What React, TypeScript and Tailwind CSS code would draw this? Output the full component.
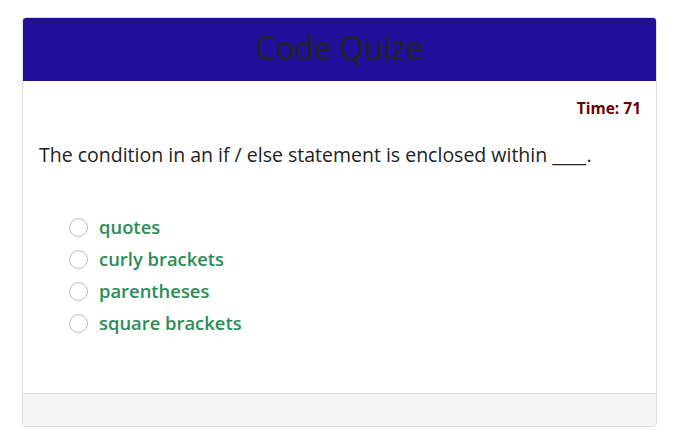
import React from "react";

const options = ["quotes", "curly brackets", "parentheses", "square brackets"];

export default function App() {
  return (
    <div className="w-[673px] h-[448px] bg-white pt-[17px] px-[22px]" style={{ fontFamily: '"Open Sans", "Noto Sans", sans-serif' }}>
      <div className="w-[635px] border border-[#dddddd] rounded-[4px] overflow-hidden flex flex-col">
        <div className="h-[63px] bg-[#220f99] flex items-center justify-center pb-[4px]">
          <h1 className="text-[32px] leading-none text-[#222222] tracking-[-0.3px]">Code Quize</h1>
        </div>
        <div className="h-[312px] px-[16px] pt-[17px]">
          <div className="flex justify-end">
            <span className="text-[15.5px] font-bold text-[#6b0000] leading-[20px] mr-[-1px]">Time: 71</span>
          </div>
          <p className="mt-[24px] text-[19.5px] leading-[26px] text-[#222222] font-medium">
            The condition in an if / else statement is enclosed within ____.
          </p>
          <ul className="mt-[43px] pl-[30px] flex flex-col">
            {options.map((o) => (
              <li key={o} className="h-[32px] flex items-center">
                <span className="w-[19px] h-[19px] rounded-full border border-[#bbbbbb] bg-white shrink-0" />
                <span className="ml-[11px] text-[18.4px] font-semibold text-[#2e8b57]">{o}</span>
              </li>
            ))}
          </ul>
        </div>
        <div className="h-[33px] bg-[#f5f5f5] border-t border-[#dddddd]" />
      </div>
    </div>
  );
}
